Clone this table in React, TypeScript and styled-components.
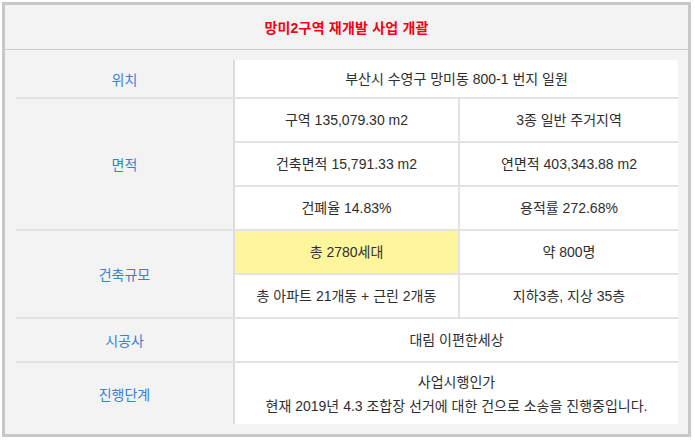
import { createGlobalStyle, styled } from "styled-components";

const GlobalStyle = createGlobalStyle`
  body {
    margin: 0;
    background: #ffffff;
    font-family: "Liberation Sans", "Noto Sans CJK KR", sans-serif;
  }
`;

const Box = styled.div`
  margin: 2px 0 0 2px;
  width: 683px;
  border: 3px solid #c8c8c8;
  background-color: #f3f3f3;
`;

const Header = styled.div`
  height: 44px;
  display: flex;
  align-items: center;
  justify-content: center;
  border-bottom: 1px solid #cdcdcd;
  color: #f40012;
  font-size: 14px;
  font-weight: 700;
  letter-spacing: 0.2px;
`;

const Body = styled.div`
  padding: 10px 10px 10px 11px;
`;

const Table = styled.table`
  width: 662px;
  border-collapse: collapse;
  table-layout: fixed;
  font-size: 14px;
  color: #2e2e2e;
`;

const Label = styled.th`
  width: 218px;
  padding: 0;
  font-weight: 400;
  color: #3a80d2;
  background-color: #f3f3f3;
  border-right: 2px solid #dcdcdc;
  border-bottom: 2px solid #e2e2e2;
  text-align: center;
`;

const Cell = styled.td<{ $h?: number; $hl?: boolean }>`
  height: ${(p) => p.$h ?? 42}px;
  padding: 0;
  text-align: center;
  line-height: 24px;
  background-color: ${(p) => (p.$hl ? "#fff59d" : "#ffffff")};
  border-bottom: 2px solid #e2e2e2;
  border-left: 2px solid #e2e2e2;
`;

const LastRow = styled.tr`
  th,
  td {
    border-bottom: none;
  }
`;

export default function App() {
  return (
    <>
      <GlobalStyle />
      <Box>
        <Header>망미2구역 재개발 사업 개괄</Header>
        <Body>
          <Table>
            <colgroup>
              <col style={{ width: 218 }} />
              <col style={{ width: 225 }} />
              <col />
            </colgroup>
            <tbody>
              <tr>
                <Label>위치</Label>
                <Cell colSpan={2} $h={37}>부산시 수영구 망미동 800-1 번지 일원</Cell>
              </tr>
              <tr>
                <Label rowSpan={3}>면적</Label>
                <Cell>구역 135,079.30 m2</Cell>
                <Cell>3종 일반 주거지역</Cell>
              </tr>
              <tr>
                <Cell>건축면적 15,791.33 m2</Cell>
                <Cell>연면적 403,343.88 m2</Cell>
              </tr>
              <tr>
                <Cell>건폐율 14.83%</Cell>
                <Cell>용적률 272.68%</Cell>
              </tr>
              <tr>
                <Label rowSpan={2}>건축규모</Label>
                <Cell $hl>총 2780세대</Cell>
                <Cell>약 800명</Cell>
              </tr>
              <tr>
                <Cell>총 아파트 21개동 + 근린 2개동</Cell>
                <Cell>지하3층, 지상 35층</Cell>
              </tr>
              <tr>
                <Label>시공사</Label>
                <Cell colSpan={2}>대림 이편한세상</Cell>
              </tr>
              <LastRow>
                <Label>진행단계</Label>
                <Cell colSpan={2} $h={61}>
                  사업시행인가
                  <br />
                  현재 2019년 4.3 조합장 선거에 대한 건으로 소송을 진행중입니다.
                </Cell>
              </LastRow>
            </tbody>
          </Table>
        </Body>
      </Box>
    </>
  );
}
